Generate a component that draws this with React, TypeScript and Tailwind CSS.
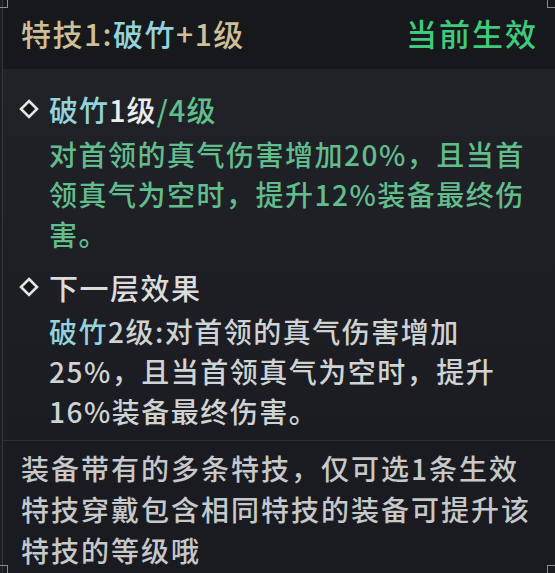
const font = { fontFamily: '"Noto Sans CJK SC", "Noto Sans", sans-serif' }

function Diamond() {
  return (
    <svg width="20" height="20" viewBox="0 0 20 20" className="shrink-0">
      <polygon points="10,2 18,10 10,18 2,10" fill="#15161a" stroke="#e4e4e4" strokeWidth="2.6" />
    </svg>
  )
}

function Corner({ className }: { className: string }) {
  return <div className={`absolute h-[8px] w-[8px] border-[#8a8c90] ${className}`} />
}

export default function App() {
  return (
    <div className="relative h-[573px] w-[555px] overflow-hidden bg-[#1c1e23] font-medium" style={font}>
      <Corner className="left-0 top-0 border-b border-r" />
      <Corner className="right-0 top-0 border-b border-l" />
      <Corner className="bottom-0 left-0 border-r border-t" />
      <Corner className="bottom-0 right-0 border-l border-t" />

      <div className="ml-[2px] flex h-full flex-col border-l border-[#34363b]">
        {/* header */}
        <div className="flex h-[69px] shrink-0 items-center justify-between bg-[#17181c] pb-[4px] pl-[18px] pr-[17px]">
          <div className="whitespace-nowrap text-[30px] leading-none tracking-[1.5px] text-[#cdbf96]">
            特技1:<span className="text-[#92d3dc]">破竹</span>+1级
          </div>
          <div className="text-[31px] leading-none tracking-[2px] text-[#3ecb7e]">当前生效</div>
        </div>

        {/* current level */}
        <div className="bg-gradient-to-b from-[#202228] to-[#1b1c21] pb-[9px] pt-[20px]">
          <div className="flex h-[40px] items-center pl-[16px]">
            <Diamond />
            <span className="ml-[10px] whitespace-nowrap text-[29px] leading-none tracking-[1px]">
              <span className="text-[#92d3dc]">破竹</span>
              <span className="text-[#ececec]">1级</span>
              <span className="text-[#5fbf8b]">/4级</span>
            </span>
          </div>
          <p className="mt-[5px] whitespace-nowrap pl-[46px] text-[28px] leading-[40px] tracking-[1.5px] text-[#62bd8c]">
            对首领的真气伤害增加20%，且当首
            <br />
            领真气为空时，提升12%装备最终伤
            <br />
            害。
          </p>

          <div className="mt-[13px] flex h-[40px] items-center pl-[16px]">
            <Diamond />
            <span className="ml-[10px] whitespace-nowrap text-[29px] leading-none tracking-[1.5px] text-[#dcdcdc]">
              下一层效果
            </span>
          </div>
          <p className="mt-[4px] whitespace-nowrap pl-[46px] text-[28px] leading-[40px] tracking-[1.5px] text-[#cfd3d3]">
            <span className="text-[#92d3dc]">破竹</span>2级:对首领的真气伤害增加
            <br />
            25%，且当首领真气为空时，提升
            <br />
            16%装备最终伤害。
          </p>
        </div>

        {/* footer */}
        <div className="flex-1 border-t border-[#2c2e33] bg-[#1a1b20] pl-[18px] pt-[7px]">
          <p className="whitespace-nowrap text-[28px] leading-[41px] tracking-[2px] text-[#c6c8c9]">
            装备带有的多条特技，仅可选1条生效
            <br />
            特技穿戴包含相同特技的装备可提升该
            <br />
            特技的等级哦
          </p>
        </div>
      </div>
    </div>
  )
}
